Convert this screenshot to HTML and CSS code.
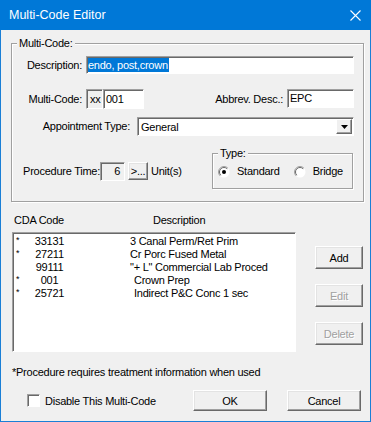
FILE: index.html
```html
<!DOCTYPE html>
<html>
<head>
<meta charset="utf-8">
<link rel="stylesheet" href="styles.css">
</head>
<body>
<div class="window">
  <div class="titlebar">
    <span class="title">Multi-Code Editor</span>
    <svg class="close" width="11" height="11" viewBox="0 0 11 11"><path d="M0.5 0.5 L10.5 10.5 M10.5 0.5 L0.5 10.5" stroke="#fff" stroke-width="1.1" fill="none"/></svg>
  </div>
  <div class="content">
    <div class="group main-group">
      <div class="gtitle">Multi-Code:</div>
      <div class="row r1">
        <span class="lbl w70">Description:</span>
        <div class="edit desc"><span class="sel">endo, post,crown</span></div>
      </div>
      <div class="row r2">
        <span class="lbl w70">Multi-Code:</span>
        <div class="edit xx">xx</div>
        <div class="edit code">001</div>
        <span class="lbl abbrev-lbl">Abbrev. Desc.:</span>
        <div class="edit abbrev">EPC</div>
      </div>
      <div class="row r3">
        <span class="lbl appt-lbl">Appointment Type:</span>
        <div class="edit combo">
          <span class="combo-text">General</span>
          <span class="drop"><svg width="7" height="4" viewBox="0 0 7 4"><path d="M0 0 H7 L3.5 4 Z" fill="#000"/></svg></span>
        </div>
      </div>
      <div class="row r4">
        <span class="lbl proc-lbl">Procedure Time:</span>
        <div class="edit time">6</div>
        <button class="btn dots">&gt;...</button>
        <span class="units">Unit(s)</span>
        <div class="group type-group">
          <div class="gtitle">Type:</div>
          <div class="radios">
            <span class="radio">
              <svg width="12" height="12" viewBox="0 0 12 12"><circle cx="6" cy="6" r="5.5" fill="#fff"/><path d="M2.1 9.9 A5.5 5.5 0 0 1 9.9 2.1" stroke="#a0a0a0" fill="none"/><path d="M2.8 9.2 A4.5 4.5 0 0 1 9.2 2.8" stroke="#696969" fill="none"/><circle cx="6" cy="6" r="2" fill="#000"/></svg>
              <span>Standard</span>
            </span>
            <span class="radio">
              <svg width="12" height="12" viewBox="0 0 12 12"><circle cx="6" cy="6" r="5.5" fill="#fff"/><path d="M2.1 9.9 A5.5 5.5 0 0 1 9.9 2.1" stroke="#a0a0a0" fill="none"/><path d="M2.8 9.2 A4.5 4.5 0 0 1 9.2 2.8" stroke="#696969" fill="none"/></svg>
              <span>Bridge</span>
            </span>
          </div>
        </div>
      </div>
    </div>

    <div class="list-head">
      <span class="h-code">CDA Code</span>
      <span class="h-desc">Description</span>
    </div>

    <div class="middle">
      <div class="list">
        <div class="lrow"><span class="star">*</span><span class="cd">33131</span><span class="ds">3 Canal Perm/Ret Prim</span></div>
        <div class="lrow"><span class="star">*</span><span class="cd">27211</span><span class="ds">Cr Porc Fused Metal</span></div>
        <div class="lrow"><span class="star"></span><span class="cd">99111</span><span class="ds">"+ L" Commercial Lab Proced</span></div>
        <div class="lrow"><span class="star">*</span><span class="cd">001</span><span class="ds indent">Crown Prep</span></div>
        <div class="lrow"><span class="star">*</span><span class="cd">25721</span><span class="ds indent">Indirect P&amp;C Conc 1 sec</span></div>
      </div>
      <div class="side">
        <button class="btn side-btn">Add</button>
        <button class="btn side-btn disabled">Edit</button>
        <button class="btn side-btn disabled">Delete</button>
      </div>
    </div>

    <div class="note">*Procedure requires treatment information when used</div>

    <div class="bottom">
      <span class="check"></span>
      <span class="check-lbl">Disable This Multi-Code</span>
      <button class="btn dlg ok">OK</button>
      <button class="btn dlg cancel">Cancel</button>
    </div>
  </div>
</div>
</body>
</html>
```

FILE: styles.css
```css
* { box-sizing: border-box; }

body {
  margin: 0;
  font-family: "Liberation Sans", Arial, sans-serif;
  font-size: 11px;
  letter-spacing: -0.25px;
  color: #000;
}

.window {
  width: 371px;
  height: 422px;
  border: 1px solid #1a7fd6;
  border-top: 0;
  background: #f0f0f0;
  display: flex;
  flex-direction: column;
}

.titlebar {
  height: 30px;
  margin: 0 -1px;
  background: #0078d7;
  color: #fff;
  display: flex;
  align-items: center;
  padding: 0 10px 0 9px;
  font-family: "Liberation Sans", Arial, sans-serif;
  font-size: 12.5px;
  letter-spacing: 0;
}

.title { flex: 1; }

.close { display: block; }

.content {
  padding: 0 6px 0 10px;
  display: flex;
  flex-direction: column;
}

.group {
  border: 1px solid #a0a0a0;
  box-shadow: inset 1px 1px #fff, 1px 1px #fff;
}

.gtitle {
  width: fit-content;
  margin: -7px 0 0 5px;
  padding: 0 2px;
  background: #f0f0f0;
  line-height: 13px;
}

.main-group {
  margin-top: 13px;
  height: 159px;
}

.row {
  display: flex;
  align-items: center;
}

.lbl {
  line-height: 13px;
  white-space: nowrap;
}

.w70 { width: 70px; text-align: right; margin-right: 4px; }

.edit {
  background: #fff;
  border: 1px solid;
  border-color: #a0a0a0 #fff #fff #a0a0a0;
  box-shadow: inset 1px 1px #696969;
  height: 18px;
  line-height: 16px;
  padding: 0 2px;
  white-space: nowrap;
}

.r1 { margin-top: 6px; }
.desc { width: 268px; padding-left: 1px; }
.sel {
  display: inline-block;
  background: #0078d7;
  color: #fff;
  line-height: 14px;
  padding-right: 1px;
}

.r2 { margin-top: 15px; height: 20px; }
.xx {
  width: 17px;
  height: 20px;
  line-height: 18px;
  background: #f0f0f0;
  padding: 0 0 0 3px;
}
.code { width: 41px; height: 20px; line-height: 18px; }
.abbrev-lbl { width: 139px; text-align: right; margin-right: 4px; }
.abbrev { width: 67px; height: 19px; align-self: flex-start; }

.r3 { margin-top: 8px; }
.appt-lbl { width: 118px; text-align: right; margin-right: 7px; }
.combo {
  width: 217px;
  height: 19px;
  display: flex;
  align-items: center;
  padding: 0 1px 0 3px;
}
.combo-text { flex: 1; }
.drop {
  width: 16px;
  height: 15px;
  background: #f0f0f0;
  border: 1px solid;
  border-color: #fff #696969 #696969 #fff;
  box-shadow: inset -1px -1px #a0a0a0;
  display: flex;
  align-items: center;
  justify-content: center;
}
.drop svg { display: block; }

.r4 { margin-top: 17px; }
.proc-lbl { width: 88px; text-align: right; }
.time {
  width: 25px;
  height: 19px;
  background: #f0f0f0;
  text-align: right;
  padding-right: 4px;
}

.btn {
  font: inherit;
  letter-spacing: inherit;
  color: #000;
  background: #f0f0f0;
  border: 1px solid;
  border-color: #fff #696969 #696969 #fff;
  box-shadow: inset -1px -1px #a0a0a0, inset 1px 1px #e3e3e3;
  padding: 0;
  margin: 0;
}

.dots {
  width: 20px;
  height: 18px;
  margin-left: 3px;
  line-height: 14px;
}

.units { margin-left: 3px; line-height: 13px; }

.type-group {
  margin-left: auto;
  margin-right: 10px;
  width: 141px;
  height: 36px;
}

.radios {
  display: flex;
  align-items: center;
  margin-top: 5px;
  padding-left: 5px;
  line-height: 13px;
}

.radio {
  display: flex;
  align-items: center;
  gap: 7px;
  margin-right: 14px;
}
.radio svg { display: block; }

.list-head {
  margin-top: 12px;
  display: flex;
  line-height: 13px;
}
.h-code { margin-left: 3px; width: 139px; }

.middle {
  display: flex;
  align-items: flex-start;
  margin-top: 5px;
}

.list {
  margin-left: 1px;
  width: 284px;
  height: 120px;
  background: #fff;
  border: 1px solid;
  border-color: #a0a0a0 #fff #fff #a0a0a0;
  box-shadow: inset 1px 1px #696969;
  padding: 2px 0 0 1px;
}

.lrow {
  display: flex;
  height: 13px;
  line-height: 13px;
  white-space: nowrap;
}
.star { width: 10px; padding-left: 2px; font-size: 9px; line-height: 11px; }
.cd { width: 51px; text-align: center; }
.ds { margin-left: 55px; }
.ds.indent { margin-left: 59px; }

.side {
  margin-left: 19px;
  display: flex;
  flex-direction: column;
  gap: 15px;
  margin-top: 14px;
}

.side-btn {
  width: 48px;
  height: 23px;
}

.disabled {
  color: #a0a0a0;
  text-shadow: 1px 1px #fff;
}

.note {
  margin-top: 14px;
  margin-left: 1px;
  line-height: 13px;
}

.bottom {
  display: flex;
  align-items: center;
  margin-top: 11px;
}

.check {
  width: 13px;
  height: 13px;
  margin-left: 16px;
  background: #fff;
  border: 1px solid;
  border-color: #a0a0a0 #fff #fff #a0a0a0;
  box-shadow: inset 1px 1px #696969;
}

.check-lbl { margin-left: 5px; }

.dlg {
  width: 74px;
  height: 21px;
}

.ok { margin-left: auto; margin-right: 20px; }
.cancel { margin-right: 3px; }
```
